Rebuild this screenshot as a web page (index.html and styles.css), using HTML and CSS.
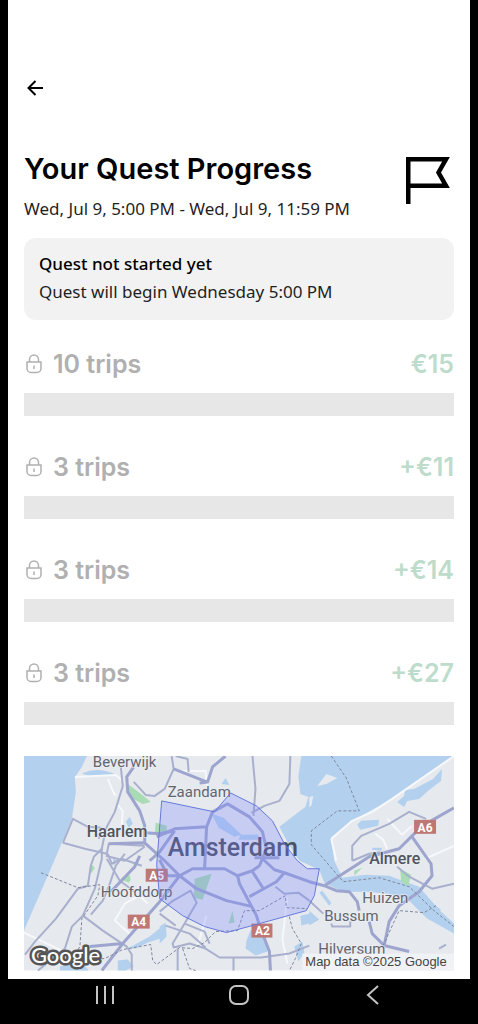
FILE: index.html
```html
<!DOCTYPE html>
<html lang="en">
<head>
    <meta charset="UTF-8">
    <meta name="viewport" content="width=device-width, initial-scale=1.0">
    <title>Your Quest Progress</title>
    <link rel="stylesheet" href="styles.css">
</head>
<body>
    <svg class="sprite" aria-hidden="true">
        <symbol id="lock" viewBox="0 0 16 20">
            <path d="M3.5 8V5.5a4.5 4.5 0 0 1 9 0V8M1 8h14v6.5a4 4 0 0 1-4 4H5a4 4 0 0 1-4-4zM8 11.5v3.5" fill="none" stroke="currentColor" stroke-width="1.5"/>
        </symbol>
    </svg>

    <main class="screen">
        <button class="back" aria-label="Back">
            <svg width="16" height="16" viewBox="0 0 16 16"><path d="M8.5 1L1.5 8l7 7M1.5 8H16" fill="none" stroke="#000" stroke-width="2"/></svg>
        </button>

        <header class="quest-header">
            <div>
                <h1>Your Quest Progress</h1>
                <p class="dates">Wed, Jul 9, 5:00 PM - Wed, Jul 9, 11:59 PM</p>
            </div>
            <svg class="flag" width="44" height="47" viewBox="0 0 44 47"><path d="M2.25 47V2.25H40L32.5 15.5L40 28.75H2.25" fill="none" stroke="#000" stroke-width="4.5"/></svg>
        </header>

        <section class="notice">
            <h2>Quest not started yet</h2>
            <p>Quest will begin Wednesday 5:00 PM</p>
        </section>

        <ul class="steps">
            <li>
                <div class="step"><svg class="lock"><use href="#lock"/></svg><span class="trips">10 trips</span><span class="reward">€15</span></div>
                <div class="bar"></div>
            </li>
            <li>
                <div class="step"><svg class="lock"><use href="#lock"/></svg><span class="trips">3 trips</span><span class="reward">+€11</span></div>
                <div class="bar"></div>
            </li>
            <li>
                <div class="step"><svg class="lock"><use href="#lock"/></svg><span class="trips">3 trips</span><span class="reward">+€14</span></div>
                <div class="bar"></div>
            </li>
            <li>
                <div class="step"><svg class="lock"><use href="#lock"/></svg><span class="trips">3 trips</span><span class="reward">+€27</span></div>
                <div class="bar"></div>
            </li>
        </ul>

        <svg class="map" viewBox="24 757 431 215" role="img" aria-label="Map of the quest area around Amsterdam">
            <rect class="land" x="24" y="757" width="431" height="215"/>

            <!-- water -->
            <g class="water">
                <path d="M24 757H87L82 768 75 778 76 793 72 820 53 865 24 932z"/>
                <path d="M83 774Q98 767 117 776L104 776Q95 779 83 775z"/>
                <path d="M302 757L299 777 301 795 309 798 306 808 293 818 280 828 289 845 300 862 320 871 325 884 343 893 367 893 390 895 410 902 428 920 455 935V757z"/>
                <path d="M126 823l4-5 3 7-4 4zM222 785l4-6 4 7zM113 858l4 5-3 4z"/>
                <path d="M128 950L150 938 166 925 167 938 148 944 136 950zM160 928l6-4 1 14-7 7zM118 962l10-1 6 7-8 4h-8zM60 968l20-6 9 10H60z"/>
                <path d="M247 942l4-10 14-1 3 22-12 4-10-7zM301 917l9-2v10l-8 2zM295 948l8-5 2 11-6 9zM323 892l9 12-2 3-10-13zM310 912l10 9-10 6z"/>
                <path d="M212 815l12 4 18 17-7 2-16-9zM241 836h18v5h-20z"/>
            </g>
            <g class="land">
                <path d="M332 840L353 822 393 800 455 757V925L440 911 420 888 390 877 366 876 343 879 335 862z"/>
                <path d="M318 787L327 775 338 779 327 785zM310 798l4-1-2 10-2 1z"/>
            </g>
            <g class="water">
                <path d="M398 803l7-6 1-6 9-1 19-10 9-10-1 12-12 9-10 9-12 2-3 6zM358 826l4-4 18-1-1 6-18 4zM373 849h10l-1 3-9-1z"/>
                <path d="M428 905l4-2 10 8-4 4z"/>
            </g>

            <!-- parks -->
            <g class="park">
                <path d="M128 785l16 12 7 6-8 2-13-7zM156 824l11 3v9h-12zM91 865l4 4-3 5-3-1zM122 881l7-7 2 7-2 3zM195 880l17-5-9 26-9-2zM233 912l2 12-6 1zM401 870l11 6-3 12-7-5zM355 872l8-3-8 8z"/>
            </g>

            <!-- shore lines and local streets -->
            <g class="street">
                <path d="M332 840L353 822 373 813 393 800 455 757M332 840L337 862"/>
                <path d="M75 778L116 776 123 782M108 780L113 792 116 797M118 806l5 6-1 14M24 934l42 20M125 905l15-8 8 8M125 905l-10 17 17 15M376 835l8 6 4 9M388 820l15 16 10-9M288 899l-5 42 5 24M197 950l10-33M176 772h30l2 20M426 860l29-13"/>
            </g>

            <!-- minor roads -->
            <g class="road">
                <path d="M121 768L123 787 115 813 106 830 102 850 94 858 91 867 88 887 78 890 56 920 35 943 25 956"/>
                <path d="M102 850L102 860 95 890 83 917 72 928 65 950 38 972M83 917L103 932 127 948 132 956V972M91 916L103 902 109 888 116 867 125 855"/>
                <path d="M63 844L73 820 88 828 101 829 99 840M63 844L85 850 107 855 109 845 145 847M108 855L112 865 122 860 142 867M106 857L125 862 145 848"/>
                <path d="M134 783L146 796 155 797 165 790 174 770 172 757M253 757L256 790 254 817M291 757L290 785 280 802 265 807 252 814M176 757L188 760 189 773"/>
                <path d="M107 860L120 882 135 893M160 913L172 903 191 892 197 904 185 925 173 945 174 949 190 945 206 950 220 959 262 959 290 955 310 947M166 927L190 935 206 949M160 915l16 12M185 925l20 8 5 12M178 950v22M234 959v13M276 888l9 7 14-1 11 8"/>
                <path d="M353 862L353 847 362 837 390 825 410 813 427 820M353 862L370 855 385 853M398 868L410 878 433 890 455 885M310 902l14 13M332 925l1 3h18v-5M440 950l7-4"/>
            </g>

            <!-- motorways -->
            <g class="highway">
                <path d="M145 843L145 827 140 812 128 793 127 778 134 768"/>
                <path d="M109 845L145 844 165 862 180 877M145 834L160 835 175 832M226 757L213 768 208 783 200 784M174 770L207 783M111 893L135 868 140 857M175 832L160 853 150 862M90 948L123 945M102 972L123 945 160 903 180 877"/>
                <path d="M157 838L175 830 207 828 213 813 228 805 250 818 263 833 267 850 260 867 253 872 238 877 225 870 193 870 180 877 168 877 160 861"/>
                <path d="M207 828L205 870M180 877L197 890 227 902 253 908M238 877L240 885 257 917 260 927 270 953 271 972M250 898L277 883 285 874 310 883 325 887M263 860L275 871 285 874M253 873l11 17M255 859h25"/>
                <path d="M325 887L337 892 350 893 358 903 360 912M370 923L373 935 385 947 410 953M385 947L390 923 400 907 420 893 433 877 432 865 413 838"/>
                <path d="M325 887L370 858 400 850 417 833 432 822 455 809"/>
            </g>

            <!-- province borders -->
            <g class="border">
                <path d="M332 757L347 779 360 812H338L312 832V846L325 861 344 883 380 879 410 888 435 912 455 928"/>
                <path d="M41 874L78 889 100 886 98 897 82 920 80 948 72 962 105 960 123 951 151 946 153 962 157 966 180 949 193 950 205 944 216 933 238 932 245 912 260 912 286 897 287 909 308 910M183 950L190 970 196 972M290 918L293 930 302 945 296 960 290 972M437 907l-12 7-25-2-16 35"/>
            </g>

            <g class="shield">
                <rect x="146" y="870" width="22" height="13"/><text x="157" y="881">A5</text>
                <rect x="128" y="916" width="22" height="14"/><text x="139" y="927">A4</text>
                <rect x="252" y="925" width="21" height="14"/><text x="263" y="936">A2</text>
                <rect x="415" y="821" width="22" height="14"/><text x="426" y="833">A6</text>
            </g>

            <g class="place">
                <text x="93" y="768">Beverwijk</text>
                <text x="168" y="798">Zaandam</text>
                <text class="town" x="87" y="838">Haarlem</text>
                <text class="city" x="168" y="857">Amsterdam</text>
                <text class="town" x="370" y="865">Almere</text>
                <text x="101" y="898">Hoofddorp</text>
                <text x="363" y="904">Huizen</text>
                <text x="325" y="922">Bussum</text>
                <text x="319" y="955">Hilversum</text>
            </g>

            <path class="area" d="M162 802L215 813 231 794 257 807 273 822 285 845 298 862 308 870H320L315 897 307 912 260 925 227 934 205 928 183 917 160 900 157 866z"/>

            <rect class="credit-bg" x="303" y="955" width="152" height="17"/>
            <text class="credit" x="306" y="967">Map data ©2025 Google</text>
            <text class="google" x="31" y="964">Google</text>
        </svg>
    </main>

    <nav class="system-nav">
        <button aria-label="Recent apps"><svg width="20" height="20" viewBox="0 0 20 20"><path d="M2 1v18M10 1v18M18 1v18"/></svg></button>
        <button aria-label="Home"><svg width="20" height="20" viewBox="0 0 20 20"><rect x="1" y="1" width="18" height="18" rx="6"/></svg></button>
        <button aria-label="Back"><svg width="20" height="20" viewBox="0 0 20 20"><path d="M15 1L5 10l10 9"/></svg></button>
    </nav>
</body>
</html>
```
FILE: styles.css
```css
* { box-sizing: border-box; }
body { margin: 0; min-height: 100vh; display: flex; flex-direction: column; background: #000; font-family: "Noto Sans", sans-serif; color: #1f1f1f; }
h1, h2, p, ul { margin: 0; padding: 0; }
button { display: flex; align-items: center; justify-content: center; padding: 0; border: 0; background: none; cursor: pointer; }
.sprite { position: absolute; width: 0; height: 0; }

.screen { flex: 1; margin: 0 8px; padding: 76px 16px 7px; background: #fff; }
.back { width: 22px; height: 24px; }

.quest-header { display: flex; justify-content: space-between; margin-top: 49px; }
h1 { font: 600 29px/40px Inter, sans-serif; color: #000; white-space: nowrap; }
.dates { margin-top: 8px; font-size: 17px; line-height: 24px; white-space: nowrap; }
.flag { flex: none; margin: 8px 4px 0 0; }

.notice { margin-top: 17px; padding: 12px 15px 14px; border-radius: 12px; background: #f2f2f2; font-size: 17px; line-height: 28px; }
.notice h2 { font-size: 17px; font-weight: 500; color: #000; }

.steps { display: grid; gap: 35px; list-style: none; margin: 28px 0 31px; }
.step { display: flex; align-items: center; height: 32px; margin-bottom: 13px; font: 600 25px/32px Inter, sans-serif; color: #b0b0b0; }
.lock { width: 16px; height: 20px; margin: 0 11px 0 2px; }
.reward { margin-left: auto; color: #bddccb; }
.bar { height: 23px; background: #e7e7e7; }

.map { display: block; width: 100%; height: auto; font-family: Roboto, sans-serif; }
.land { fill: #e6e9ed; }
.water { fill: #b3d1ee; }
.park { fill: #a9dcb4; }
.street, .road, .highway, .border { fill: none; stroke-linejoin: round; }
.street { stroke: #f7f8fb; stroke-width: 2; }
.road { stroke: #a9b0ce; stroke-width: 2; }
.highway { stroke: #9da5cf; stroke-width: 3; }
.border { stroke: #7d879b; stroke-width: 1; stroke-dasharray: 3 2; }
.area { fill: #7880ff; fill-opacity: 0.28; stroke: #6679dc; stroke-width: 1; }
.shield { fill: #be7773; font-size: 12px; font-weight: 700; text-anchor: middle; }
.shield text { fill: #fff; }
.place { fill: #61656f; stroke: #eef0f4; stroke-width: 2; stroke-opacity: 0.6; paint-order: stroke; font-size: 15px; }
.place .town { font-size: 16px; font-weight: 500; fill: #50545e; }
.place .city { font-size: 25px; font-weight: 500; fill: #4b4f62; stroke-opacity: 0; }
.credit-bg { fill: #f3f4f6; fill-opacity: 0.8; }
.credit { fill: #444; font: 13px "Liberation Sans", sans-serif; }
.google { fill: #fff; stroke: #555; stroke-width: 5; stroke-linejoin: round; paint-order: stroke; font: 500 22px Lato, sans-serif; }

.system-nav { display: flex; justify-content: space-around; align-items: center; height: 45px; padding: 0 38px 13px; }
.system-nav button { width: 48px; height: 32px; }
.system-nav svg { fill: none; stroke: #c4c4c4; stroke-width: 2; }
```
